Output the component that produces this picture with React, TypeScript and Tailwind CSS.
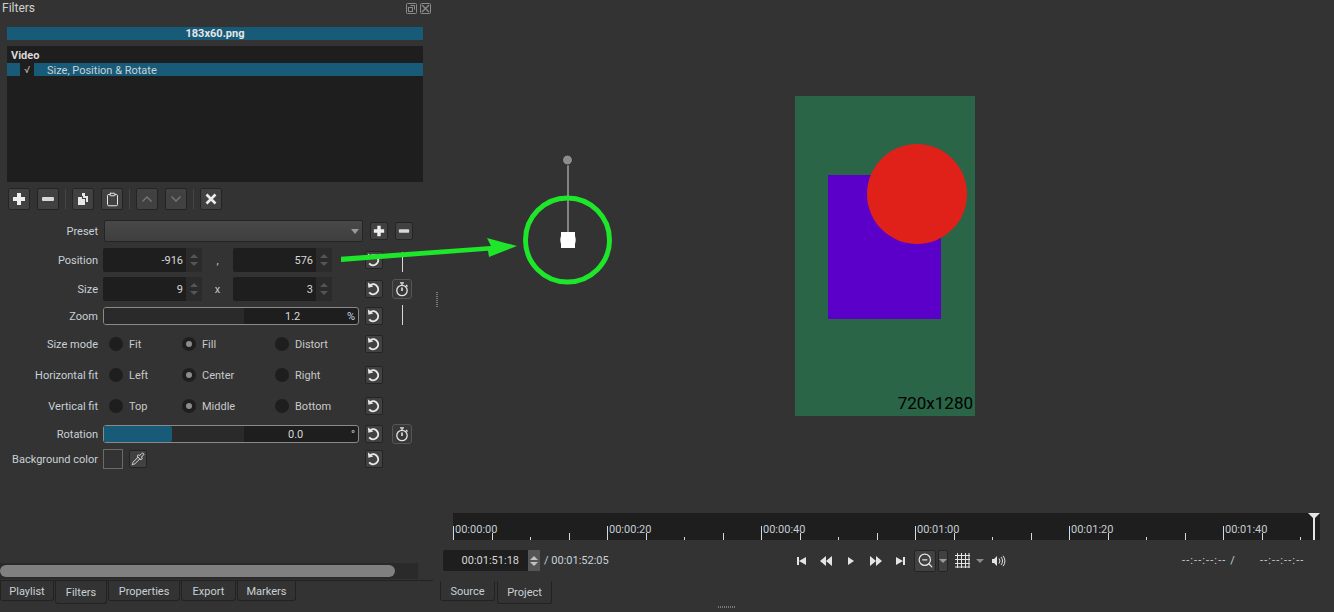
import { Clipboard, Pipette, ZoomOut } from "lucide-react";
import type { ReactNode } from "react";

const FONT = "font-['Roboto','Noto_Sans',sans-serif]";

function Btn({ children, className = "" }: { children?: ReactNode; className?: string }) {
  return (
    <div className={`flex shrink-0 items-center justify-center rounded-[2px] border border-[#242424] bg-[#414141] ${className}`}>
      {children}
    </div>
  );
}

function PlusIcon({ size = 14 }: { size?: number }) {
  return (
    <svg width={size} height={size} viewBox="0 0 14 14">
      <path d="M5 1h4v4h4v4H9v4H5V9H1V5h4z" fill="#eeeeee" />
    </svg>
  );
}

function MinusIcon({ size = 14 }: { size?: number }) {
  return (
    <svg width={size} height={size} viewBox="0 0 14 14">
      <rect x="1" y="5" width="12" height="4" rx="1" fill="#d8d8d8" />
    </svg>
  );
}

function UndoBtn() {
  return (
    <Btn className="h-[18px] w-[18px]">
      <svg width="14" height="14" viewBox="0 0 14 14" fill="none">
        <path d="M3.500 3A5 5 0 1 1 2.200 10.300" stroke="#e8e8e8" strokeWidth="2" />
        <path d="M1 0.500l0.300 5.300 5-1.300z" fill="#e8e8e8" />
      </svg>
    </Btn>
  );
}

function Stopwatch() {
  return (
    <div className="flex h-5 w-5 items-center justify-center rounded-[3px] border border-[#555555] bg-[#383838]">
      <svg width="14" height="15" viewBox="0 0 14 15" fill="none" stroke="#e4e4e4">
        <circle cx="7" cy="8.500" r="5.200" strokeWidth="1.300" />
        <path d="M5 0.800h4M7 1v2M11 3l1.500 1.500" strokeWidth="1.300" />
        <path d="M7 5.500v3.500" strokeWidth="1.600" />
      </svg>
    </div>
  );
}

function Spin({ value }: { value: string }) {
  return (
    <div className="flex h-full w-[99px] rounded-[2px] bg-[#1e1e1e]">
      <div className="flex flex-1 items-center justify-end pr-[3px] pt-[2px] text-[#d8d8d8]">{value}</div>
      <div className="flex w-[16px] flex-col items-center justify-center gap-[4px] rounded-r-[2px] bg-[#2b2b2b]">
        <div className="h-0 w-0 border-x-[4px] border-b-[4px] border-x-transparent border-b-[#555555]" />
        <div className="h-0 w-0 border-x-[4px] border-t-[4px] border-x-transparent border-t-[#555555]" />
      </div>
    </div>
  );
}

function Row({ label, h, mt, children, tail, keyframe }: { label: string; h: number; mt: number; children?: ReactNode; tail?: ReactNode; keyframe?: ReactNode }) {
  return (
    <div className="flex items-center" style={{ height: h, marginTop: mt }}>
      <div className="w-[98px] shrink-0 pt-[2px] text-right whitespace-nowrap text-[#c9d1d6]">{label}</div>
      <div className="ml-[5px] flex h-full w-[256px] shrink-0 items-center">{children}</div>
      <div className="ml-[6px] w-[18px] shrink-0">{tail}</div>
      <div className="ml-[9px] flex h-full w-5 shrink-0 items-center justify-center">{keyframe}</div>
    </div>
  );
}

function Radio({ label, on, w }: { label: string; on?: boolean; w: string }) {
  return (
    <div className={`flex items-center gap-[6px] ${w}`}>
      <div className="ml-[6px] flex h-[14px] w-[14px] items-center justify-center rounded-full bg-[#1e1e1e]">
        {on && <div className="h-[6px] w-[6px] rounded-full bg-[#8c8c8c]" />}
      </div>
      <span className="pt-[2px] text-[#c9c9c9]">{label}</span>
    </div>
  );
}

function RadioRow({ label, mt, opts, on }: { label: string; mt: number; opts: string[]; on: number }) {
  return (
    <Row label={label} h={18} mt={mt} tail={<UndoBtn />}>
      <Radio label={opts[0]} w="w-[73px]" on={on === 0} />
      <Radio label={opts[1]} w="w-[93px]" on={on === 1} />
      <Radio label={opts[2]} w="w-[80px]" on={on === 2} />
    </Row>
  );
}

function Slider({ value, unit, fill }: { value: string; unit: string; fill?: boolean }) {
  return (
    <div className="relative flex h-full w-full items-center overflow-hidden rounded-[3px] border border-[#8a8a8a] bg-[#1e1e1e]">
      <div className="h-full w-[140px] bg-[#2a2a2a]">
        {fill && <div className="h-full w-[68px] rounded-r-[2px] bg-[#175b78]" />}
      </div>
      <div className={`flex-1 pt-[2px] text-[#d8d8d8] ${fill ? "pl-[44px]" : "pl-[41px]"}`}>{value}</div>
      <div className="pr-[3px] pt-[2px] text-[#c8d6e2]">{unit}</div>
    </div>
  );
}

function Tab({ label, w, active }: { label: string; w: string; active?: boolean }) {
  return (
    <div className={`flex shrink-0 items-center justify-center rounded-b-[3px] border border-t-0 border-[#222222] pt-[2px] text-[#c9d1d6] ${w} ${active ? "h-[23px]" : "h-[20px]"}`}>
      {label}
    </div>
  );
}

function Transport({ d }: { d: string }) {
  return (
    <svg width="14" height="12" viewBox="0 0 14 12">
      <path d={d} fill="#e4e4e4" />
    </svg>
  );
}

const MAJOR = ["00:00:00", "00:00:20", "00:00:40", "00:01:00", "00:01:20", "00:01:40"];

function Ruler() {
  return (
    <div className="relative ml-[13px] mr-[14px] flex h-[27px] shrink-0 overflow-hidden bg-[#1e1e1e]">
      {MAJOR.map((t) => (
        <div key={t} className="relative h-full w-[154px] shrink-0">
          <div className="absolute bottom-0 left-0 h-[14px] w-px bg-[#d8d8d8]" />
          <div className="absolute bottom-0 left-[38.5px] h-[7px] w-px bg-[#d8d8d8]" />
          <div className="absolute bottom-0 left-[77px] h-[3px] w-px bg-[#d8d8d8]" />
          <div className="absolute bottom-0 left-[115.5px] h-[7px] w-px bg-[#d8d8d8]" />
          <span className="absolute bottom-[3px] left-[2px] leading-[14px] text-[#c4cdd4]">{t}</span>
        </div>
      ))}
      <div className="absolute left-[860px] top-0 h-full w-[2px] bg-[#e4e4e4]" />
      <div className="absolute left-[855px] top-0 h-0 w-0 border-x-[6px] border-t-[6px] border-x-transparent border-t-[#e4e4e4]" />
    </div>
  );
}

export default function App() {
  return (
    <div className={`relative flex h-[612px] w-[1334px] overflow-hidden bg-[#333333] text-[11px] leading-[14px] ${FONT}`}>
      {/* Filters dock */}
      <div className="flex w-[433px] shrink-0 flex-col">
        <div className="flex h-[16px] items-center justify-between pl-[2px] pr-[2px] text-[12px] text-[#d0d0d0]">
          <span>Filters</span>
          <div className="flex gap-[3px]">
            <svg width="11" height="11" viewBox="0 0 11 11" fill="none" stroke="#8a8a8a">
              <rect x="0.5" y="0.5" width="10" height="10" rx="1" />
              <rect x="2.5" y="4.5" width="4" height="4" />
              <path d="M4.5 2.5h4v4" />
            </svg>
            <svg width="11" height="11" viewBox="0 0 11 11" fill="none" stroke="#8a8a8a">
              <rect x="0.5" y="0.5" width="10" height="10" rx="1" />
              <path d="M2 2l7 7M9 2l-7 7" strokeWidth="1.4" />
            </svg>
          </div>
        </div>

        <div className="ml-[7px] mr-[10px] mt-[11px] flex h-[13px] items-center justify-center bg-[#175b78] font-bold text-[#e6e6e6]">
          183x60.png
        </div>

        <div className="ml-[7px] mr-[10px] mt-[6px] h-[136px] bg-[#1e1e1e]">
          <div className="flex h-[17px] items-end pl-[4px] font-bold text-[#d8d8d8]">Video</div>
          <div className="flex h-[13px] items-center bg-[#175b78]">
            <div className="ml-[13px] flex h-[13px] w-[14px] items-center justify-center bg-[#1e1e1e] text-[10px] text-[#b8b8b8]">√</div>
            <span className="ml-[13px] pt-[2px] text-[#c9d1d6]">Size, Position &amp; Rotate</span>
          </div>
        </div>

        <div className="ml-[8px] mt-[6px] flex h-[22px] items-center">
          <Btn className="h-[22px] w-[22px]"><PlusIcon /></Btn>
          <Btn className="ml-[7px] h-[22px] w-[22px]"><MinusIcon /></Btn>
          <div className="mx-[6px] h-[20px] w-px bg-[#444444]" />
          <Btn className="h-[22px] w-[22px]">
            <svg width="14" height="14" viewBox="0 0 14 14">
              <path d="M2 5h4v2h3v6H2z" fill="#e6e6e6" />
              <path d="M6 1h3v3h3v6h-2V6H7V4H6z" fill="#e6e6e6" />
            </svg>
          </Btn>
          <Btn className="ml-[7px] h-[22px] w-[22px]"><Clipboard size={15} color="#e6e6e6" strokeWidth={1.6} /></Btn>
          <div className="mx-[6px] h-[20px] w-px bg-[#444444]" />
          <Btn className="h-[22px] w-[22px] border-[#2c2c2c] bg-[#383838]">
            <svg width="12" height="8" viewBox="0 0 12 8" fill="none"><path d="M1.5 6.5L6 2l4.500 4.500" stroke="#777777" strokeWidth="1.3" /></svg>
          </Btn>
          <Btn className="ml-[7px] h-[22px] w-[22px] border-[#2c2c2c] bg-[#383838]">
            <svg width="12" height="8" viewBox="0 0 12 8" fill="none"><path d="M1.5 1.500L6 6l4.500-4.500" stroke="#777777" strokeWidth="1.3" /></svg>
          </Btn>
          <div className="mx-[6px] h-[20px] w-px bg-[#444444]" />
          <Btn className="h-[22px] w-[22px]">
            <svg width="12" height="12" viewBox="0 0 12 12" fill="none"><path d="M1.500 1.500l9 9M10.500 1.500l-9 9" stroke="#ececec" strokeWidth="2.600" /></svg>
          </Btn>
        </div>

        <Row
          label="Preset"
          h={22}
          mt={10}
          tail={
            <div className="flex gap-[7px] pl-[5px]">
              <Btn className="h-[18px] w-[18px]"><PlusIcon size={12} /></Btn>
              <Btn className="h-[18px] w-[18px]"><MinusIcon size={12} /></Btn>
            </div>
          }
        >
          <div className="ml-px flex h-full w-[259px] shrink-0 items-center justify-end rounded-[2px] border border-[#242424] bg-gradient-to-b from-[#484848] to-[#3e3e3e] pr-[3px]">
            <div className="h-0 w-0 border-x-[4px] border-t-[5px] border-x-transparent border-t-[#9a9a9a]" />
          </div>
        </Row>
        <Row label="Position" h={24} mt={6} tail={<UndoBtn />} keyframe={<div className="mt-[4px] h-[20px] w-px bg-[#d8d8d8]" />}>
          <Spin value="-916" />
          <div className="w-[31px] pt-[2px] text-center text-[#c9c9c9]">,</div>
          <Spin value="576" />
        </Row>
        <Row label="Size" h={24} mt={5} tail={<UndoBtn />} keyframe={<Stopwatch />}>
          <Spin value="9" />
          <div className="w-[31px] pt-[2px] text-center text-[#c9c9c9]">x</div>
          <Spin value="3" />
        </Row>
        <Row label="Zoom" h={18} mt={6} tail={<UndoBtn />} keyframe={<div className="mb-[3px] h-[20px] w-px bg-[#d8d8d8]" />}>
          <Slider value="1.2" unit="%" />
        </Row>
        <RadioRow label="Size mode" mt={10} opts={["Fit", "Fill", "Distort"]} on={1} />
        <RadioRow label="Horizontal fit" mt={13} opts={["Left", "Center", "Right"]} on={1} />
        <RadioRow label="Vertical fit" mt={13} opts={["Top", "Middle", "Bottom"]} on={1} />
        <Row label="Rotation" h={18} mt={10} tail={<UndoBtn />} keyframe={<Stopwatch />}>
          <Slider value="0.0" unit="°" fill />
        </Row>
        <Row label="Background color" h={20} mt={6} tail={<UndoBtn />}>
          <div className="h-[20px] w-[20px] border border-[#6a6a6a] bg-[#333333]" />
          <Btn className="ml-[6px] h-[18px] w-[18px]"><Pipette size={14} color="#e6e6e6" strokeWidth={1.6} /></Btn>
        </Row>

        <div className="mt-auto h-[16px] w-[418px] shrink-0 bg-[#2a2a2a] pt-[2px]">
          <div className="h-[12px] w-[395px] rounded-full bg-[#808080]" />
        </div>
        <div className="mt-[1px] flex h-[32px] shrink-0 border-t border-[#222222]">
          <Tab label="Playlist" w="w-[54px]" />
          <Tab label="Filters" w="ml-px w-[52px]" active />
          <Tab label="Properties" w="ml-px w-[72px]" />
          <Tab label="Export" w="ml-px w-[55px]" />
          <Tab label="Markers" w="ml-px w-[59px]" />
        </div>
      </div>

      {/* Splitter */}
      <div className="flex w-[7px] shrink-0 items-center justify-center pb-[12px]">
        <div className="h-[16px] w-[2px] bg-[repeating-linear-gradient(to_bottom,#7a7a7a_0,#7a7a7a_1px,transparent_1px,transparent_2px)]" />
      </div>

      {/* Player */}
      <div className="flex min-w-0 flex-1 flex-col">
        <div className="relative h-[513px] shrink-0">
          <div className="absolute left-[355px] top-[96px] h-[320px] w-[180px] bg-[#2a6547]">
            <div className="absolute left-[33px] top-[79px] h-[144px] w-[113px] bg-[#5a00c8]" />
            <div className="absolute left-[72px] top-[48px] h-[100px] w-[100px] rounded-full bg-[#e0211a]" />
            <span className="absolute bottom-[3px] right-[2px] text-[17px] leading-[20px] text-black">720x1280</span>
          </div>
        </div>
        <Ruler />

        <div className="flex h-[41px] shrink-0 items-center">
          <div className="ml-[3px] flex h-[21px] w-[97px] items-stretch rounded-[2px] bg-[#1e1e1e]">
            <span className="flex-1 self-center pr-[9px] text-right text-[#d8d8d8]">00:01:51:18</span>
            <div className="flex w-[12px] flex-col items-center justify-center gap-[2px] bg-[#555555]">
              <div className="h-0 w-0 border-x-[4px] border-b-[4px] border-x-transparent border-b-[#c0c0c0]" />
              <div className="h-0 w-0 border-x-[4px] border-t-[4px] border-x-transparent border-t-[#c0c0c0]" />
            </div>
          </div>
          <span className="ml-[4px] w-[250px] whitespace-nowrap text-[#c9d1d6]">/ 00:01:52:05</span>
          <div className="flex items-center gap-[11px]">
            <Transport d="M3 2h2v8H3zM12 2v8L5 6z" />
            <Transport d="M7 1v10L1 6zM13 1v10L7 6z" />
            <Transport d="M4 2l6 4-6 4z" />
            <Transport d="M1 1l6 5-6 5zM7 1l6 5-6 5z" />
            <Transport d="M2 2l7 4-7 4zM9 2h2v8H9z" />
          </div>
          <Btn className="ml-[6px] h-[22px] w-[22px] border-[#5a5a5a] bg-[#3c3c3c]"><ZoomOut size={17} color="#e6e6e6" strokeWidth={1.7} /></Btn>
          <Btn className="ml-[2px] h-[22px] w-[10px] border-[#5a5a5a] bg-[#3c3c3c]">
            <div className="h-0 w-0 border-x-[4px] border-t-[4px] border-x-transparent border-t-[#9a9a9a]" />
          </Btn>
          <svg className="ml-[7px]" width="15" height="15" viewBox="0 0 15 15" stroke="#e4e4e4" strokeWidth="1">
            <path d="M2.500 0v15M6.500 0v15M10.500 0v15M14 0v15M0 2.500h15M0 6.500h15M0 10.500h15M0 14h15" />
          </svg>
          <div className="ml-[6px] h-0 w-0 border-x-[4px] border-t-[4px] border-x-transparent border-t-[#8a8a8a]" />
          <svg className="ml-[8px]" width="14" height="12" viewBox="0 0 14 12" fill="none">
            <path d="M0 4h2l3-3v10L2 8H0z" fill="#e4e4e4" />
            <path d="M7 3.500a4 4 0 0 1 0 5M9 2a6 6 0 0 1 0 8M11 0.800a8 8 0 0 1 0 10.400" stroke="#e4e4e4" />
          </svg>
          <span className="ml-[176px] w-[78px] shrink-0 whitespace-nowrap tracking-[1.1px] text-[#c9d1d6]">--:--:--:-- /</span>
          <span className="whitespace-nowrap tracking-[1.1px] text-[#c9d1d6]">--:--:--:--</span>
        </div>

        <div className="flex h-[31px] shrink-0 items-start">
          <Tab label="Source" w="w-[55px]" />
          <Tab label="Project" w="ml-[2px] w-[55px]" active />
        </div>
      </div>

      {/* window grip */}
      <div className="absolute bottom-[4px] left-[718px] h-[2px] w-[17px] bg-[repeating-linear-gradient(to_right,#7a7a7a_0,#7a7a7a_1px,transparent_1px,transparent_2px)]" />

      {/* rotate handle and annotation drawn on top of the dock */}
      <svg className="pointer-events-none absolute left-0 top-0" width="1334" height="612" viewBox="0 0 1334 612" fill="none">
        <line x1="568" y1="160" x2="568" y2="240" stroke="#a0a0a0" strokeWidth="1.500" />
        <circle cx="567.500" cy="160" r="5" fill="#8c8c8c" stroke="#2a2a2a" />
        <circle cx="568" cy="240" r="8" fill="#c8c8c8" />
        <rect x="561" y="232" width="14" height="16" fill="#ffffff" />
        <circle cx="567.500" cy="240" r="42" stroke="#1ee62a" strokeWidth="5" />
        <path d="M341 256.700L491 246l-4-8 30 8-28 11-1-6.300L341 262z" fill="#1ee62a" />
      </svg>
    </div>
  );
}
